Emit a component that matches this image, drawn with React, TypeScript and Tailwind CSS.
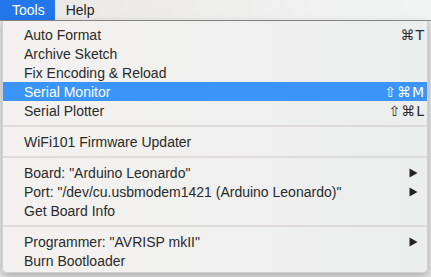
import React from "react";

type Item =
  | { kind: "item"; label: string; shortcut?: string; arrow?: boolean; active?: boolean }
  | { kind: "sep" };

const items: Item[] = [
  { kind: "item", label: "Auto Format", shortcut: "⌘T" },
  { kind: "item", label: "Archive Sketch" },
  { kind: "item", label: "Fix Encoding & Reload" },
  { kind: "item", label: "Serial Monitor", shortcut: "⇧⌘M", active: true },
  { kind: "item", label: "Serial Plotter", shortcut: "⇧⌘L" },
  { kind: "sep" },
  { kind: "item", label: "WiFi101 Firmware Updater" },
  { kind: "sep" },
  { kind: "item", label: 'Board: "Arduino Leonardo"', arrow: true },
  { kind: "item", label: 'Port: "/dev/cu.usbmodem1421 (Arduino Leonardo)"', arrow: true },
  { kind: "item", label: "Get Board Info" },
  { kind: "sep" },
  { kind: "item", label: 'Programmer: "AVRISP mkII"', arrow: true },
  { kind: "item", label: "Burn Bootloader" },
];

function Arrow({ white }: { white?: boolean }) {
  return (
    <svg width="9" height="10" viewBox="0 0 9 10" className="mr-[9px]">
      <path d="M0.5 0.5 L8.5 5 L0.5 9.5 Z" fill={white ? "#ffffff" : "#222222"} />
    </svg>
  );
}

export default function App() {
  return (
    <div
      className="relative w-[431px] h-[277px] overflow-hidden bg-[#e4e4e4]"
      style={{ fontFamily: '"Liberation Sans", "DejaVu Sans", sans-serif' }}
    >
      <div className="h-[21px] flex items-stretch bg-gradient-to-r from-[#ebe8e6] to-[#f1f4f3] border-b border-[#8c8c8c] text-[14px] text-[#222]">
        <div className="bg-[#2377ea] text-white pl-[12px] pr-[10px] flex items-center">Tools</div>
        <div className="pl-[11px] flex items-center">Help</div>
      </div>
      <div className="absolute left-[2px] top-[21px] w-[426px] h-[252px] rounded-b-[5px] bg-gradient-to-r from-[#f4f2f1] to-[#ebeeed] shadow-[0_3px_8px_rgba(0,0,0,0.25)] border border-t-0 border-[#d0d0d0] pt-[4px] text-[14px] text-[#2a2a2a]">
        {items.map((it, i) =>
          it.kind === "sep" ? (
            <div key={i} className="h-[12px] flex items-center">
              <div className="w-full h-[2px] bg-[#dedcdb]" />
            </div>
          ) : (
            <div
              key={i}
              className={
                "h-[19px] flex items-center justify-between pl-[21px] " +
                (it.active ? "bg-[#3b95f8] text-white" : "")
              }
            >
              <span className="leading-none">{it.label}</span>
              {it.shortcut ? (
                <span className="pr-[2px] leading-none tracking-[1px]" style={{ fontFamily: '"DejaVu Sans", sans-serif', fontSize: "14px" }}>
                  {it.shortcut}
                </span>
              ) : it.arrow ? (
                <Arrow white={it.active} />
              ) : null}
            </div>
          )
        )}
      </div>
    </div>
  );
}
